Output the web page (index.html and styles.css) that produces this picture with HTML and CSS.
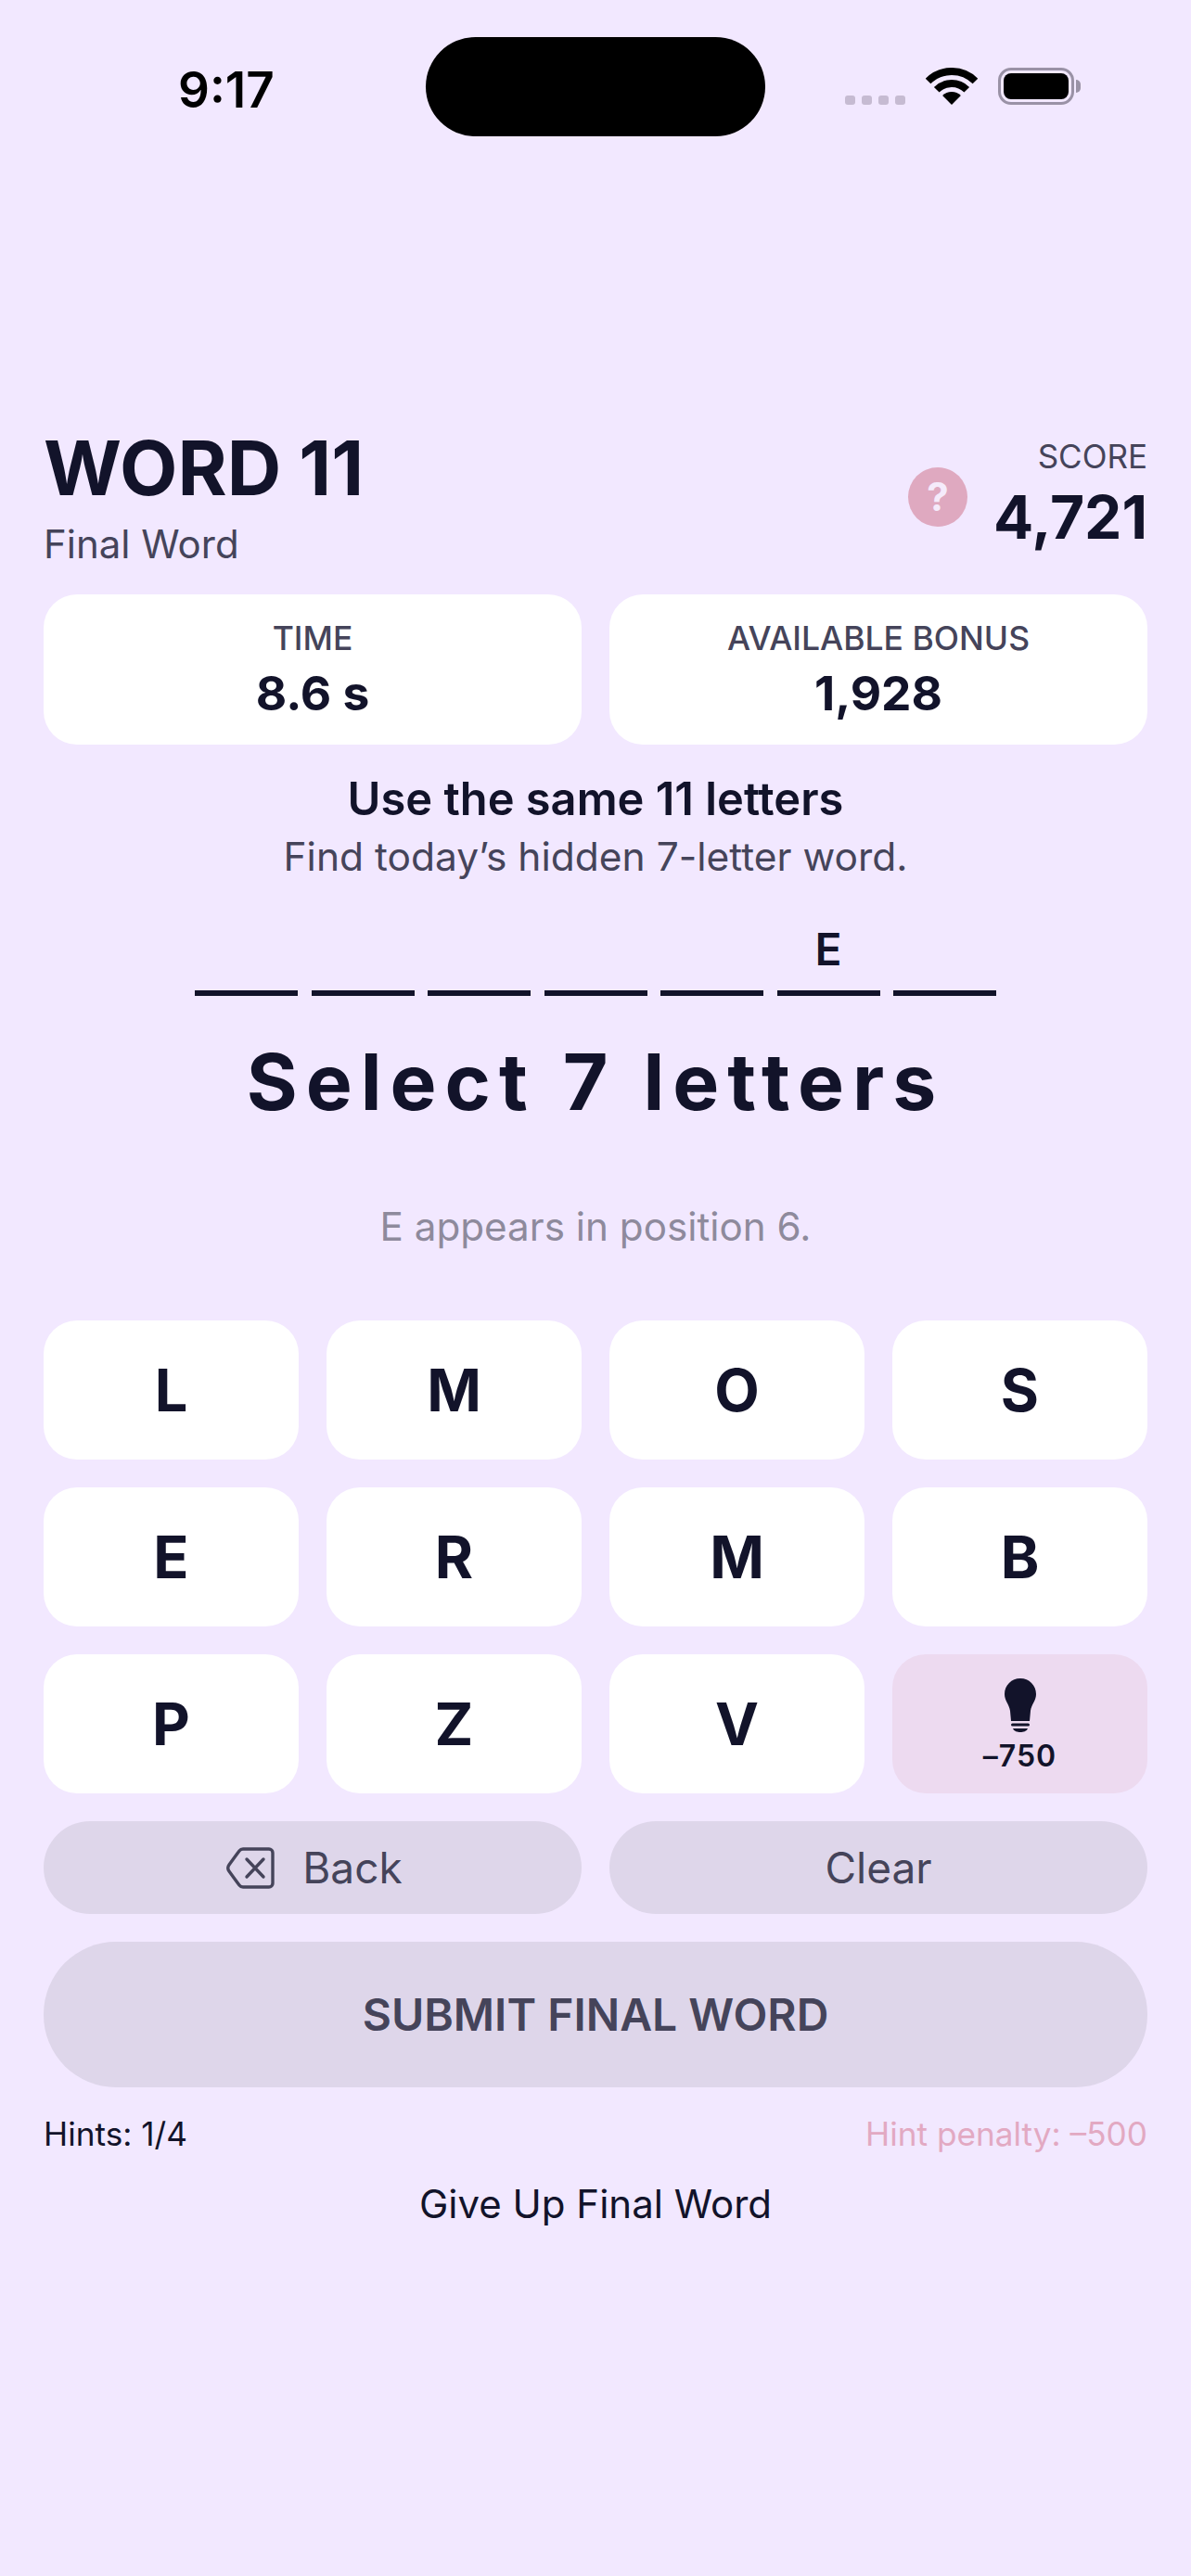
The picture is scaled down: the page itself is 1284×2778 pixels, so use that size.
FILE: index.html
```html
<!DOCTYPE html>
<html lang="en">
<head>
  <meta charset="UTF-8">
  <title>Word 11</title>
  <link rel="stylesheet" href="styles.css">
</head>
<body>
  <div class="status">
    <div class="clock">9:17</div>
    <div class="island"></div>
    <div class="status-icons">
      <div class="signal"><span></span><span></span><span></span><span></span></div>
      <svg class="wifi" width="56" height="40" viewBox="0 0 56 40">
        <path d="M28 40 L18.1 30.1 A14 14 0 0 1 37.9 30.1Z" fill="#000"/>
        <path d="M11.74 23.74 A23 23 0 0 1 44.26 23.74" fill="none" stroke="#000" stroke-width="8"/>
        <path d="M2.54 14.54 A36 36 0 0 1 53.46 14.54" fill="none" stroke="#000" stroke-width="8"/>
      </svg>
      <div class="battery"><div class="battery-body"><div class="battery-fill"></div></div><div class="battery-nub"></div></div>
    </div>
  </div>

  <div class="game">
    <div class="head">
      <div>
        <h1>WORD 11</h1>
        <div class="subtitle">Final Word</div>
      </div>
      <div class="head-right">
        <div class="help">?</div>
        <div class="score">
          <div class="score-label">SCORE</div>
          <div class="score-value">4,721</div>
        </div>
      </div>
    </div>

    <div class="stats">
      <div class="stat"><div class="stat-label">TIME</div><div class="stat-value">8.6 s</div></div>
      <div class="stat"><div class="stat-label">AVAILABLE BONUS</div><div class="stat-value">1,928</div></div>
    </div>

    <h2>Use the same 11 letters</h2>
    <p class="lead">Find today’s hidden 7-letter word.</p>

    <div class="slots">
      <div class="slot"></div>
      <div class="slot"></div>
      <div class="slot"></div>
      <div class="slot"></div>
      <div class="slot"></div>
      <div class="slot">E</div>
      <div class="slot"></div>
    </div>

    <div class="prompt">Select 7 letters</div>
    <div class="clue">E appears in position 6.</div>

    <div class="keys">
      <button class="key">L</button>
      <button class="key">M</button>
      <button class="key">O</button>
      <button class="key">S</button>
      <button class="key">E</button>
      <button class="key">R</button>
      <button class="key">M</button>
      <button class="key">B</button>
      <button class="key">P</button>
      <button class="key">Z</button>
      <button class="key">V</button>
      <button class="key key-hint">
        <svg width="34" height="58" viewBox="0 0 34 58">
          <path d="M17 0C7.5 0 0 7.5 0 17C0 24 5 28 6 35L7 46H27L28 35C29 28 34 24 34 17C34 7.5 26.5 0 17 0Z" fill="#12132a"/>
          <rect x="7" y="48.5" width="20" height="3" rx="1.5" fill="#12132a"/>
          <path d="M9 54H25C24 57 20 58 17 58C14 58 10 57 9 54Z" fill="#12132a"/>
        </svg>
        <span>–750</span>
      </button>
    </div>

    <div class="actions">
      <button class="action">
        <svg width="52" height="45" viewBox="0 0 52 45" fill="none" stroke="#45445a" stroke-width="3.4" stroke-linecap="round" stroke-linejoin="round">
          <path d="M18 2H46A4 4 0 0 1 50 6V39A4 4 0 0 1 46 43H18A5 5 0 0 1 14 41L3 26A6 6 0 0 1 3 19L14 4A5 5 0 0 1 18 2Z"/>
          <path d="M22 13L40 32M40 13L22 32"/>
        </svg>
        Back
      </button>
      <button class="action">Clear</button>
    </div>

    <button class="submit">SUBMIT FINAL WORD</button>

    <div class="foot">
      <span>Hints: 1/4</span>
      <span class="penalty">Hint penalty: –500</span>
    </div>
    <div class="give-up">Give Up Final Word</div>
  </div>
</body>
</html>
```

FILE: styles.css
```css
body {
  margin: 0;
  width: 1284px;
  height: 2778px;
  overflow: hidden;
  background-color: #f2e8ff;
  color: #12132a;
  font-family: Inter, "Noto Sans", sans-serif;
}

button {
  border: none;
  font-family: inherit;
  color: inherit;
  padding: 0;
}

/* status bar */
.status {
  display: grid;
  grid-template-columns: 459px 366px auto;
  grid-template-rows: 107px;
  padding-top: 40px;
  height: 107px;
}

.clock {
  padding-left: 192px;
  font-size: 53px;
  font-weight: 600;
  line-height: 114px;
  color: #000;
}

.island {
  background-color: #000;
  border-radius: 54px;
}

.status-icons {
  display: flex;
  align-items: flex-end;
  padding-left: 86px;
  padding-bottom: 34px;
}

.signal {
  display: flex;
  gap: 7px;
  margin-right: 22px;
}

.signal span {
  width: 11px;
  height: 10px;
  border-radius: 3px;
  background-color: #c6bbd2;
}

.wifi {
  display: block;
  margin-right: 22px;
}

.battery {
  display: flex;
  align-items: center;
}

.battery-body {
  box-sizing: border-box;
  width: 82px;
  height: 40px;
  padding: 3px;
  border: 3px solid #9a92a6;
  border-radius: 14px;
}

.battery-fill {
  height: 100%;
  background-color: #000;
  border-radius: 8px;
}

.battery-nub {
  width: 5px;
  height: 14px;
  margin-left: 2px;
  background-color: #9a92a6;
  border-radius: 0 7px 7px 0;
}

/* game */
.game {
  padding: 0 47px;
}

.head {
  display: flex;
  justify-content: space-between;
  padding-top: 310px;
}

h1 {
  margin: 0;
  font-size: 81px;
  font-weight: 700;
  line-height: 96px;
}

.subtitle {
  margin-top: 2px;
  font-size: 42px;
  line-height: 64px;
  color: #45445a;
}

.head-right {
  display: flex;
  align-items: flex-start;
  gap: 28px;
}

.help {
  width: 64px;
  height: 64px;
  margin-top: 47px;
  border-radius: 50%;
  background-color: #dfa9c0;
  color: #f5ebfb;
  font-size: 42px;
  font-weight: 700;
  line-height: 64px;
  text-align: center;
}

.score {
  padding-top: 13px;
  text-align: right;
}

.score-label {
  font-size: 35px;
  line-height: 44px;
  color: #45445a;
}

.score-value {
  margin-top: 9px;
  font-size: 64px;
  font-weight: 700;
  line-height: 70px;
}

.stats {
  display: grid;
  grid-template-columns: 1fr 1fr;
  gap: 30px;
  margin-top: 22px;
}

.stat {
  height: 162px;
  padding-top: 26px;
  box-sizing: border-box;
  background-color: #fff;
  border-radius: 36px;
  text-align: center;
}

.stat-label {
  font-size: 35.5px;
  font-weight: 500;
  line-height: 44px;
  color: #45445a;
}

.stat-value {
  margin-top: 6px;
  font-size: 51.5px;
  font-weight: 700;
  line-height: 60px;
}

h2 {
  margin: 30px 0 0;
  font-size: 48.8px;
  font-weight: 600;
  line-height: 58px;
  text-align: center;
}

.lead {
  margin: 4px 0 0;
  font-size: 42.5px;
  line-height: 58px;
  text-align: center;
  color: #45445a;
}

.slots {
  display: flex;
  justify-content: center;
  gap: 14.5px;
  margin-top: 35px;
}

.slot {
  width: 111px;
  height: 80px;
  border-bottom: 6px solid #12132a;
  font-size: 48px;
  font-weight: 600;
  line-height: 72px;
  text-align: center;
}

.prompt {
  margin-top: 43px;
  font-size: 84px;
  font-weight: 700;
  line-height: 100px;
  letter-spacing: 9px;
  text-align: center;
}

.clue {
  margin-top: 77px;
  font-size: 42.2px;
  line-height: 58px;
  text-align: center;
  color: #8e8a9c;
}

.keys {
  display: grid;
  grid-template-columns: repeat(4, 1fr);
  grid-auto-rows: 150px;
  gap: 30px;
  margin-top: 72px;
}

.key {
  background-color: #fff;
  border-radius: 36px;
  font-size: 63px;
  font-weight: 700;
}

.key-hint {
  display: flex;
  flex-direction: column;
  align-items: center;
  padding-top: 26px;
  background-color: #eddaf0;
}

.key-hint span {
  margin-top: 6px;
  font-size: 32px;
  font-weight: 600;
  line-height: 40px;
  letter-spacing: 1px;
}

.actions {
  display: grid;
  grid-template-columns: 1fr 1fr;
  gap: 30px;
  margin-top: 30px;
}

.action {
  display: flex;
  align-items: center;
  justify-content: center;
  gap: 30px;
  height: 100px;
  border-radius: 50px;
  background-color: #ded6ea;
  color: #45445a;
  font-size: 46px;
}

.action svg {
  margin-left: 4px;
}

.submit {
  display: block;
  width: 100%;
  height: 157px;
  margin-top: 30px;
  border-radius: 78px;
  background-color: #ded6ea;
  color: #45445a;
  font-size: 48px;
  font-weight: 600;
}

.foot {
  display: flex;
  justify-content: space-between;
  margin-top: 28px;
  font-size: 35.2px;
  line-height: 44px;
}

.penalty {
  color: #e2a9c2;
}

.give-up {
  margin-top: 26px;
  font-size: 42px;
  line-height: 56px;
  text-align: center;
}
```
